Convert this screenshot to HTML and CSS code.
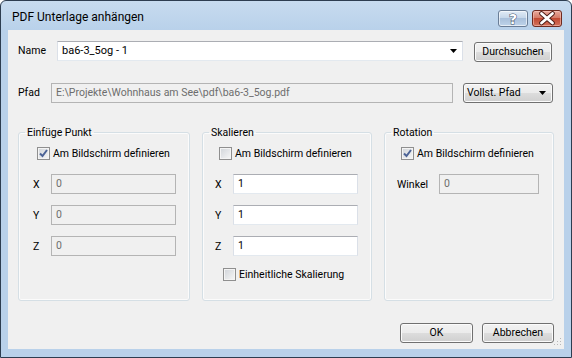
FILE: index.html
```html
<!DOCTYPE html>
<html lang="de">
<head>
    <meta charset="UTF-8">
    <title>PDF Unterlage anhängen</title>
    <link rel="stylesheet" href="styles.css">
</head>
<body>

<div class="window">
    <div class="titlebar">
        <span class="title">PDF Unterlage anhängen</span>
        <div class="caption-buttons">
            <span class="cap-btn help">
                <svg width="30" height="17" viewBox="0 0 30 17">
                    <text x="15" y="14" text-anchor="middle" font-family="DejaVu Sans, sans-serif" font-weight="bold" font-size="14" fill="#fff" stroke="#3f4f66" stroke-width="1" paint-order="stroke">?</text>
                </svg>
            </span>
            <span class="cap-btn close">
                <svg width="30" height="17" viewBox="0 0 30 17">
                    <path d="M9.5 3.5 L20.5 13 M20.5 3.5 L9.5 13" stroke="#4a1a14" stroke-width="4.6" stroke-linecap="round"/>
                    <path d="M9.5 3.5 L20.5 13 M20.5 3.5 L9.5 13" stroke="#fff" stroke-width="2.8" stroke-linecap="round"/>
                </svg>
            </span>
        </div>
    </div>

    <div class="client">
        <div class="row">
            <label class="lbl lbl-name">Name</label>
            <div class="combo">
                <span class="combo-text">ba6-3_5og - 1</span>
                <svg class="arrow" width="7" height="4" viewBox="0 0 7 4"><path d="M0 0h7L3.5 4z"/></svg>
            </div>
            <button class="btn btn-browse">Durchsuchen</button>
        </div>

        <div class="row row-path">
            <label class="lbl lbl-path">Pfad</label>
            <div class="field disabled path-field">E:\Projekte\Wohnhaus am See\pdf\ba6-3_5og.pdf</div>
            <div class="dropdown">
                <span>Vollst. Pfad</span>
                <svg class="arrow" width="7" height="4" viewBox="0 0 7 4"><path d="M0 0h7L3.5 4z"/></svg>
            </div>
        </div>

        <div class="groups">
            <fieldset class="group group-insert">
                <legend>Einfüge Punkt</legend>
                <div class="group-body">
                    <label class="check"><span class="box"><svg width="11" height="11" viewBox="0 0 11 11"><path d="M2 5.5 L4.5 8 L9 2" stroke="#4c6396" stroke-width="2" fill="none"/></svg></span>Am Bildschirm definieren</label>
                    <div class="coord"><span class="coord-lbl">X</span><div class="field disabled">0</div></div>
                    <div class="coord"><span class="coord-lbl">Y</span><div class="field disabled">0</div></div>
                    <div class="coord"><span class="coord-lbl">Z</span><div class="field disabled">0</div></div>
                </div>
            </fieldset>

            <fieldset class="group group-scale">
                <legend>Skalieren</legend>
                <div class="group-body">
                    <label class="check"><span class="box"></span>Am Bildschirm definieren</label>
                    <div class="coord"><span class="coord-lbl">X</span><div class="field">1</div></div>
                    <div class="coord"><span class="coord-lbl">Y</span><div class="field">1</div></div>
                    <div class="coord"><span class="coord-lbl">Z</span><div class="field">1</div></div>
                    <label class="check check-uniform"><span class="box"></span>Einheitliche Skalierung</label>
                </div>
            </fieldset>

            <fieldset class="group group-rotate">
                <legend>Rotation</legend>
                <div class="group-body">
                    <label class="check"><span class="box"><svg width="11" height="11" viewBox="0 0 11 11"><path d="M2 5.5 L4.5 8 L9 2" stroke="#4c6396" stroke-width="2" fill="none"/></svg></span>Am Bildschirm definieren</label>
                    <div class="coord"><span class="coord-lbl angle-lbl">Winkel</span><div class="field disabled angle-field">0</div></div>
                </div>
            </fieldset>
        </div>

        <div class="footer">
            <button class="btn btn-ok">OK</button>
            <button class="btn btn-cancel">Abbrechen</button>
        </div>

        <svg class="grip" width="8" height="8" viewBox="0 0 8 8">
            <rect x="6" y="0" width="1" height="1" fill="#b8b8b8"/>
            <rect x="3" y="3" width="1" height="1" fill="#b8b8b8"/>
            <rect x="6" y="3" width="1" height="1" fill="#b8b8b8"/>
            <rect x="0" y="6" width="1" height="1" fill="#b8b8b8"/>
            <rect x="3" y="6" width="1" height="1" fill="#b8b8b8"/>
            <rect x="6" y="6" width="1" height="1" fill="#b8b8b8"/>
        </svg>
    </div>
</div>

</body>
</html>
```

FILE: styles.css
```css
body {
    margin: 0;
    font-family: Roboto, "Noto Sans", "Liberation Sans", sans-serif;
    font-size: 10.5px;
    color: #000000;
    background: #ffffff;
}
.window {
    box-sizing: border-box;
    width: 572px;
    height: 358px;
    border: 1px solid #2d3d50;
    border-radius: 6px 6px 0 0;
    background: linear-gradient(#c7dbef, #b9d1ea 29px, #b9d1ea);
    padding: 0 7px 8px 7px;
    display: flex;
    flex-direction: column;
}
.titlebar {
    height: 29px;
    display: flex;
    align-items: flex-start;
    flex-shrink: 0;
}
.title {
    margin: 8px 0 0 4px;
    font-size: 12px;
    line-height: 16px;
    color: #000000;
}
.caption-buttons {
    margin: 9px 2px 0 auto;
    display: flex;
    gap: 4px;
}
.cap-btn {
    box-sizing: border-box;
    width: 30px;
    height: 17px;
    border-radius: 3px;
    display: flex;
    overflow: hidden;
}
.cap-btn svg {
    margin: -1px;
}
.help {
    border: 1px solid #6a7d96;
    background: linear-gradient(#e1ebf6, #c6d7ea 45%, #a9c0db 50%, #bed3ea);
    box-shadow: inset 0 0 0 1px rgba(255, 255, 255, 0.6);
}
.close {
    border: 1px solid #6e2a20;
    background: linear-gradient(#e9a99c, #d57b68 45%, #c24a33 50%, #d2735d);
    box-shadow: inset 0 0 0 1px rgba(255, 210, 200, 0.5);
}
.client {
    position: relative;
    flex: 1;
    background: #f0f0f0;
    padding: 11px 11px 0 10px;
    display: flex;
    flex-direction: column;
}
.row {
    display: flex;
    align-items: flex-start;
    height: 20px;
}
.row-path {
    margin-top: 22px;
}
.lbl {
    line-height: 20px;
}
.lbl-name {
    width: 39px;
}
.lbl-path {
    width: 33px;
}
.combo, .field {
    box-sizing: border-box;
    height: 20px;
    background: #ffffff;
    border: 1px solid #dbe0e8;
    border-top-color: #abadb3;
    border-bottom-color: #e3e9ef;
    line-height: 18px;
    padding-left: 4px;
}
.combo {
    width: 406px;
    display: flex;
    align-items: center;
    font-size: 11px;
}
.combo-text {
    flex: 1;
}
.combo .arrow {
    margin-right: 5px;
}
.field.disabled {
    background: #f0f0f0;
    border-color: #b4b4b4;
    color: #6d6d6d;
}
.path-field {
    width: 402px;
}
.btn {
    box-sizing: border-box;
    font-family: inherit;
    font-size: 10.5px;
    color: #000000;
    border: 1px solid #707070;
    border-radius: 3px;
    background: linear-gradient(#f2f2f2, #ebebeb 50%, #dddddd 50%, #cfcfcf);
    box-shadow: inset 0 0 0 1px #fbfbfb;
    height: 20px;
    padding: 0;
    line-height: 16px;
}
.btn-browse {
    margin: 1px 0 0 11px;
    width: 78px;
}
.dropdown {
    box-sizing: border-box;
    margin-left: 10px;
    width: 90px;
    height: 20px;
    border: 1px solid #707070;
    border-radius: 3px;
    background: linear-gradient(#f2f2f2, #ebebeb 50%, #dddddd 50%, #cfcfcf);
    box-shadow: inset 0 0 0 1px #fbfbfb;
    display: flex;
    align-items: center;
    padding: 0 6px 0 3px;
    line-height: 18px;
}
.dropdown span {
    flex: 1;
}
.groups {
    margin-top: 22px;
    display: grid;
    grid-template-columns: 172px 170px 170px;
    column-gap: 12px;
}
.group {
    margin: 0;
    padding: 0;
    min-width: 0;
    height: 176px;
    box-sizing: border-box;
    border: 1px solid #d5dfe5;
    border-radius: 3px;
    box-shadow: inset 0 0 0 1px #fbfbfb;
}
.group legend {
    margin-left: 6px;
    padding: 0 2px;
    line-height: 15px;
}
.group-body {
    padding: 6px 0 0 18px;
    display: flex;
    flex-direction: column;
}
.check {
    display: flex;
    align-items: center;
    height: 15px;
}
.box {
    box-sizing: border-box;
    width: 13px;
    height: 13px;
    margin-right: 3px;
    border: 1px solid #8f8f8f;
    background: linear-gradient(135deg, #d0d4d9, #f7f7f7);
    box-shadow: inset 0 0 0 1px #f4f4f4;
    display: flex;
}
.box svg {
    display: block;
}
.coord {
    display: flex;
    align-items: center;
    margin-left: -4px;
    margin-top: 11px;
}
.coord:first-of-type {
    margin-top: 13px;
}
.coord-lbl {
    width: 18px;
}
.coord .field {
    width: 125px;
}
.group-scale .group-body {
    padding-left: 16px;
}
.group-rotate .group-body {
    padding-left: 16px;
}
.angle-lbl {
    width: 42px;
}
.coord .angle-field {
    width: 100px;
}
.check-uniform {
    margin: 11px 0 0 4px;
}
.footer {
    margin: 22px -1px 0 0;
    display: flex;
    justify-content: flex-end;
    gap: 9px;
}
.btn-ok {
    width: 73px;
}
.btn-cancel {
    width: 72px;
}
.grip {
    position: absolute;
    right: 2px;
    bottom: 3px;
}
```
